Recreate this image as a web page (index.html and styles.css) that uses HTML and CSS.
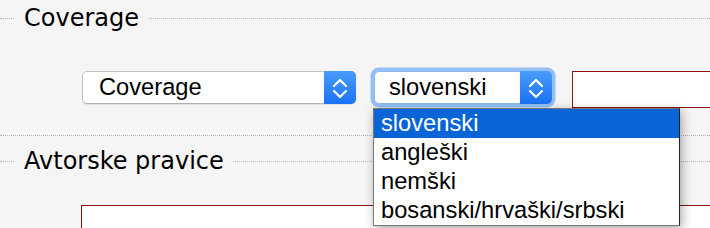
FILE: index.html
```html
<!DOCTYPE html>
<html lang="sl">
<head>
    <meta charset="UTF-8">
    <title>Coverage</title>
    <link rel="stylesheet" href="styles.css">
</head>
<body>
    <fieldset class="group">
        <legend>Coverage</legend>
        <div class="row">
            <div class="select select-wide">
                <span class="select-label">Coverage</span>
                <span class="select-arrow">
                    <svg width="32" height="31" viewBox="0 0 32 31"><path d="M10 14 L16 8 L22 14 M10 19 L16 25 L22 19" fill="none" stroke="#fff" stroke-width="2.2" stroke-linecap="round" stroke-linejoin="round"/></svg>
                </span>
            </div>
            <div class="select select-lang is-open">
                <span class="select-label">slovenski</span>
                <span class="select-arrow">
                    <svg width="32" height="31" viewBox="0 0 32 31"><path d="M10 14 L16 8 L22 14 M10 19 L16 25 L22 19" fill="none" stroke="#fff" stroke-width="2.2" stroke-linecap="round" stroke-linejoin="round"/></svg>
                </span>
                <ul class="dropdown">
                    <li class="active">slovenski</li>
                    <li>angleški</li>
                    <li>nemški</li>
                    <li>bosanski/hrvaški/srbski</li>
                </ul>
            </div>
            <div class="text-field"></div>
        </div>
    </fieldset>

    <div class="separator"></div>

    <fieldset class="group">
        <legend>Avtorske pravice</legend>
        <div class="text-area"></div>
    </fieldset>
</body>
</html>
```

FILE: styles.css
```css
* {
    box-sizing: border-box;
}

body {
    margin: 0;
    padding-top: 5px;
    height: 228px;
    background: #f5f5f5;
    color: #000;
    font-family: 'DejaVu Sans', sans-serif;
    overflow: hidden;
}

/* Blocs du formulaire */
.group {
    margin: 0;
    padding: 0 0 27px;
    border: 0;
    border-top: 1px dotted #b3b3b3;
    min-width: 0;
}

.group legend {
    margin-left: 15px;
    padding: 0 9px;
    font-size: 24px;
    line-height: 26px;
}

.separator {
    border-top: 1px dotted #b3b3b3;
    margin-bottom: 12px;
}

.row {
    display: flex;
    align-items: flex-start;
    margin: 40px -2px 0 82px;
}

/* Listes déroulantes */
.select {
    position: relative;
    display: flex;
    flex-shrink: 0;
    height: 33px;
    background: #fff;
    border: 1px solid #c4c4c4;
    border-bottom-color: #b0b0b0;
    border-radius: 5px;
    box-shadow: 0 1px 1px rgba(0, 0, 0, 0.08);
    font-family: 'Liberation Sans', Arial, sans-serif;
    font-size: 23.7px;
}

.select-label {
    flex: 1;
    padding-left: 16px;
    line-height: 31px;
    white-space: nowrap;
}

.select-arrow {
    width: 32px;
    margin: -1px -1px -1px 0;
    height: 33px;
    display: flex;
    align-items: center;
    background: linear-gradient(#4a9cf9, #1a72f5);
    border-radius: 0 5px 5px 0;
}

.select-wide {
    width: 274px;
}

.select-lang {
    width: 178px;
    margin-left: 18px;
}

.select-lang .select-label {
    padding-left: 14px;
}

.is-open {
    box-shadow: 0 0 0 3.5px #94c0f6;
    border-color: #8fb9ee;
}

.dropdown {
    position: absolute;
    top: 36px;
    left: -2px;
    width: 307px;
    margin: 0;
    padding: 0;
    list-style: none;
    background: #fff;
    border: 1px solid #777;
    border-right-color: #222;
    box-shadow: 2px 3px 10px rgba(0, 0, 0, 0.35);
    z-index: 5;
}

.dropdown li {
    height: 29px;
    line-height: 28px;
    padding-left: 7px;
    white-space: nowrap;
}

.dropdown li.active {
    background: #0964d6;
    color: #fff;
}

/* Champs texte */
.text-field {
    flex: 1;
    height: 37px;
    margin-left: 20px;
    background: #fff;
    border: 1px solid #8a1212;
}

.text-area {
    height: 60px;
    margin: 31px -2px 0 81px;
    background: #fff;
    border: 1px solid #8a1212;
}
```
